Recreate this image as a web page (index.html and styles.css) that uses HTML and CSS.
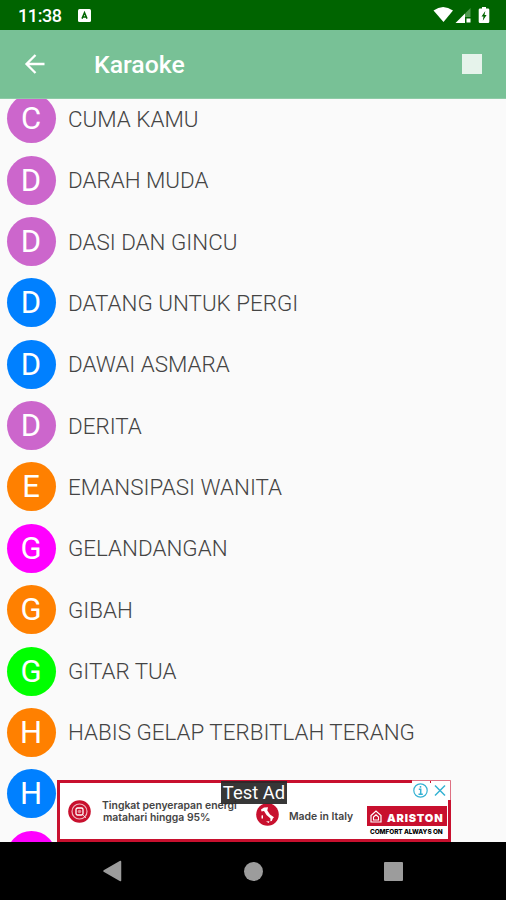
FILE: index.html
```html
<!DOCTYPE html>
<html lang="id">
<head>
    <meta charset="UTF-8">
    <title>Karaoke</title>
    <link rel="stylesheet" href="styles.css">
</head>
<body>
	<div class="phone">
		<div class="statusbar">
			<span class="clock">11:38</span>
			<svg class="app-icon" width="13" height="13" viewBox="0 0 13 13">
				<rect width="13" height="13" rx="1.5" fill="#fff"/>
				<path d="M4 9.6L6.5 3.6L9 9.6M5.2 8H7.8" fill="none" stroke="#006400" stroke-width="1.5"/>
			</svg>
			<svg class="status-icons" width="58" height="20" viewBox="0 0 58 20">
				<path d="M0.5 4.5Q10 -2.5 20 4.5L10.5 16Z" fill="#fff"/>
				<path d="M37.5 2V11H32V7.5Z" fill="#4f9a4f"/>
				<path d="M22.5 17L32 7.5V17Z" fill="#fff"/>
				<rect x="33.5" y="12.5" width="4" height="4" fill="#fff"/>
				<path d="M49 1h4v1.500h2q1.300 0 1.300 1.300v12q0 1.300 -1.300 1.300h-8q-1.300 0 -1.300 -1.300V3.800q0 -1.300 1.300 -1.300H49z" fill="#fff"/>
				<path d="M52.300 5L48.500 10.500H50.500L49.800 14.800L53.600 9H51.500Z" fill="#006400"/>
			</svg>
		</div>

		<div class="toolbar">
			<svg class="back" width="22" height="22" viewBox="0 0 22 22">
				<path d="M11.500 2L2.500 11L11.500 20M2.500 11H20.500" fill="none" stroke="#fff" stroke-width="2.300"/>
			</svg>
			<h1>Karaoke</h1>
			<div class="stop"></div>
		</div>

		<div class="content">
			<ul class="songs">
				<li><span class="letter orchid">C</span>CUMA KAMU</li>
				<li><span class="letter orchid">D</span>DARAH MUDA</li>
				<li><span class="letter orchid">D</span>DASI DAN GINCU</li>
				<li><span class="letter blue">D</span>DATANG UNTUK PERGI</li>
				<li><span class="letter blue">D</span>DAWAI ASMARA</li>
				<li><span class="letter orchid">D</span>DERITA</li>
				<li><span class="letter orange">E</span>EMANSIPASI WANITA</li>
				<li><span class="letter magenta">G</span>GELANDANGAN</li>
				<li><span class="letter orange">G</span>GIBAH</li>
				<li><span class="letter green">G</span>GITAR TUA</li>
				<li><span class="letter orange">H</span>HABIS GELAP TERBITLAH TERANG</li>
				<li><span class="letter blue">H</span></li>
				<li><span class="letter magenta"></span></li>
			</ul>

			<div class="ad">
				<svg class="ad-heat" width="23" height="23" viewBox="0 0 23 23">
					<circle cx="11.500" cy="11.500" r="11.300" fill="#c8102e"/>
					<circle cx="11.500" cy="11.500" r="7.500" fill="none" stroke="#fff" stroke-opacity=".7" stroke-width="1.200"/>
					<rect x="8" y="8" width="7" height="7" rx="1.500" fill="none" stroke="#fff" stroke-width="1.300"/>
					<circle cx="11.500" cy="11.500" r="1.800" fill="#e58a96"/>
					<path d="M15 15L18 18" stroke="#fff" stroke-opacity=".7"/>
				</svg>
				<p class="ad-text">Tingkat penyerapan energi<br><span>matahari hingga 95%</span></p>
				<svg class="ad-italy" width="23" height="23" viewBox="0 0 23 23">
					<circle cx="11.500" cy="11.500" r="11.300" fill="#c8102e"/>
					<path d="M5 6.500L8 4.500L12 4.300L11.300 7.500L14 11.500L18 14.300L16.800 15.500L15.800 18L14.300 18.200L14.500 15.500L10.500 12L8 8L5.500 8.500Z" fill="#fff"/>
					<path d="M10 18.500L13.500 18.300L12.800 20ZM5.500 12.500L7 12.300V15.500H5.500Z" fill="#fff"/>
				</svg>
				<p class="ad-made">Made in Italy</p>
				<div class="ad-brand">
					<div class="ad-logo">
						<svg width="12" height="13" viewBox="0 0 12 13">
							<path d="M1 12V5.500L6 1L11 5.500V12Z" fill="none" stroke="#fff" stroke-width="1.200"/>
							<path d="M3.500 10V7L6 4.800L8.500 7V10Z" fill="none" stroke="#fff" stroke-width="1.100"/>
						</svg>
						<b>ARISTON</b>
					</div>
					<div class="ad-slogan">COMFORT ALWAYS ON</div>
				</div>
				<div class="ad-test">Test Ad</div>
				<svg class="ad-choices" width="39" height="20" viewBox="0 0 39 20">
					<rect width="39" height="20" fill="#fff"/>
					<path d="M0 .5H38.500V20" fill="none" stroke="#c8102e" stroke-opacity=".6"/>
					<path d="M18.500 1V3" stroke="#c8102e"/>
					<circle cx="8.500" cy="10.500" r="6.700" fill="none" stroke="#35b2d3" stroke-width="1.200"/>
					<path d="M8.500 6V7.800M6.800 9.300H8.700V14M6.500 14.200H10.800" fill="none" stroke="#35b2d3" stroke-width="1.500"/>
					<path d="M23 5.500L33 15.500M33 5.500L23 15.500" stroke="#35b2d3" stroke-width="1.500"/>
				</svg>
			</div>
		</div>

		<div class="navbar">
			<svg width="20" height="22" viewBox="0 0 20 22">
				<path d="M18.500 1.500V20.500L2 11Z" fill="#9c9c9c" stroke="#9c9c9c" stroke-width="1.500" stroke-linejoin="round"/>
			</svg>
			<div class="home"></div>
			<div class="recent"></div>
		</div>
	</div>
</body>
</html>
```
FILE: styles.css
```css
* {
	box-sizing: border-box;
}

body {
	margin: 0;
	font-family: Roboto, sans-serif;
	background-color: #fafafa;
}

h1, p, ul {
	margin: 0;
	padding: 0;
}

.phone {
	display: flex;
	flex-direction: column;
	width: 506px;
	height: 900px;
	overflow: hidden;
}

.statusbar {
	display: flex;
	align-items: center;
	height: 30px;
	padding: 1px 16px 0 18px;
	background-color: #006400;
	color: white;
}

.clock {
	width: 60px;
	font-size: 18px;
	font-weight: 500;
	letter-spacing: -0.4px;
	line-height: 30px;
}

.status-icons {
	margin-left: auto;
	margin-right: -1px;
}

/* toolbar */
.toolbar {
	display: flex;
	align-items: center;
	height: 69px;
	padding: 0 24px 0 24px;
	background-color: #78c196;
	border-bottom: 1px solid #8fcba7;
	color: white;
}

.toolbar h1 {
	margin-left: 48px;
	font-size: 24.8px;
	font-weight: 500;
}

.stop {
	width: 20px;
	height: 20px;
	margin-left: auto;
	background-color: #e6f3eb;
}

/* song list */
.content {
	position: relative;
	height: 743px;
	overflow: hidden;
}

.songs {
	margin-top: -11px;
	list-style: none;
}

.songs li {
	display: flex;
	align-items: center;
	height: 61.35px;
	padding-left: 6.5px;
	padding-top: 0.5px;
	font-size: 22.4px;
	font-weight: 300;
	color: #444;
	white-space: nowrap;
}

.letter {
	width: 49px;
	height: 49px;
	margin-right: 12.5px;
	border-radius: 50%;
	color: white;
	font-size: 31px;
	font-weight: 400;
	line-height: 49px;
	text-align: center;
}

.orchid {
	background-color: #cc66cc;
}
.blue {
	background-color: #0080ff;
}
.orange {
	background-color: #ff8000;
}
.magenta {
	background-color: #ff00ff;
}
.green {
	background-color: #00ff00;
}

/* banner over the bottom of the list */
.ad {
	position: absolute;
	left: 57px;
	bottom: 0;
	display: flex;
	align-items: flex-start;
	width: 394px;
	height: 62px;
	padding-left: 8px;
	border: 3px solid #c8102e;
	background-color: white;
	color: #444;
	font-family: Inter, sans-serif;
	font-size: 10.4px;
	font-weight: 600;
	line-height: 12px;
	white-space: nowrap;
}

.ad-heat {
	margin-top: 17px;
}

.ad-text {
	width: 142px;
	margin: 17px 0 0 11px;
}

.ad-text span {
	margin-left: 1px;
}

.ad-italy {
	margin: 20px 0 0 12px;
}

.ad-made {
	width: 67px;
	margin: 28px 0 0 10px;
}

.ad-brand {
	width: 80px;
	margin: 23px 0 0 11px;
}

.ad-logo {
	display: flex;
	align-items: center;
	height: 20px;
	padding-left: 3px;
	background-color: #c8102e;
	color: white;
}

.ad-logo b {
	margin: 4px 0 0 5px;
	font-size: 11px;
	letter-spacing: 0.8px;
}

.ad-slogan {
	padding-left: 3px;
	color: black;
	font-size: 6.4px;
	font-weight: 800;
	letter-spacing: -0.05px;
	line-height: 12px;
}

.ad-test {
	position: absolute;
	left: 161px;
	top: -2px;
	width: 66px;
	height: 23px;
	background-color: rgba(40, 40, 40, 0.93);
	color: white;
	font-family: Roboto, sans-serif;
	font-size: 18.4px;
	font-weight: 400;
	line-height: 24px;
	text-align: center;
}

.ad-choices {
	position: absolute;
	right: -3px;
	top: -3px;
}

/* system buttons */
.navbar {
	display: flex;
	align-items: center;
	height: 58px;
	padding-left: 102px;
	background-color: black;
}

.home {
	width: 19px;
	height: 19px;
	margin-left: 122px;
	border-radius: 50%;
	background-color: #9c9c9c;
}

.recent {
	width: 19px;
	height: 19px;
	margin-left: 121px;
	border-radius: 1px;
	background-color: #9c9c9c;
}
```
